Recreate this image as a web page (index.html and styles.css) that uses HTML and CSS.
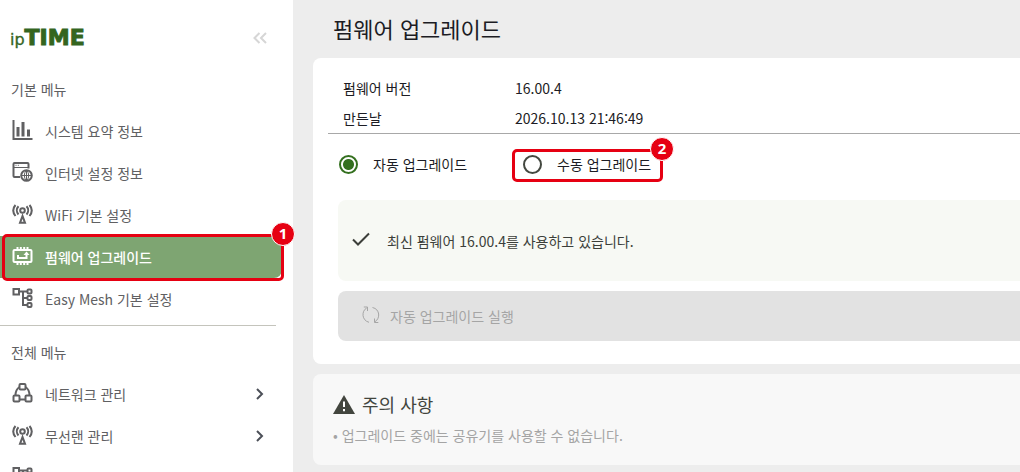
FILE: index.html
```html
<!DOCTYPE html>
<html lang="ko">
    <head>
        <meta charset="utf-8">
        <title>펌웨어 업그레이드</title>
        <link rel="stylesheet" href="styles.css">
    </head>
    <body>
        <!-- shared icons -->
        <svg class="sprite" aria-hidden="true">
            <symbol id="antenna" viewBox="0 0 20 20">
                <circle cx="10" cy="6.5" r="2.3"/>
                <path d="M6 10.5C3.8 8 3.8 4.5 6 2.2M14 10.5C16.200 8 16.200 4.500 14 2.200M3 12C.2 8.500.2 4.300 3 1M17 12C19.800 8.500 19.800 4.300 17 1M10 12L7.500 18.800H12.500Z"/>
            </symbol>
            <symbol id="mesh" viewBox="0 0 20 20">
                <path d="M1 1H6.500V6.500H1ZM6.500 3.500H15M10.500 3.500V17H15M10.500 10H15"/>
                <rect x="15" y="1.5" width="4" height="4" rx="1"/>
                <rect x="15" y="8" width="4" height="4" rx="1"/>
                <rect x="15" y="15" width="4" height="4" rx="1"/>
            </symbol>
            <symbol id="arrow" viewBox="0 0 10 14">
                <path d="M2 2L7 7L2 12"/>
            </symbol>
        </svg>
        <div class="layout">
            <nav class="sidebar">
                <div class="top">
                    <a class="logo" href="#"><span class="ip">ip</span><span class="time">TIME</span></a>
                    <button type="button" class="fold" aria-label="메뉴 접기">
                        <svg viewBox="0 0 14 12"><path d="M6.500 1L1.500 6L6.500 11M13 1L8 6L13 11"/></svg>
                    </button>
                </div>
                <h2>기본 메뉴</h2>
                <ul class="menu basic">
                    <li><a href="#">
                        <svg class="icon" viewBox="0 0 20 20"><path d="M1 0V19H20"/><path class="bars" d="M5.500 7V16.500M10.500 2V16.500M16 9.500V16.500"/></svg>
                        시스템 요약 정보</a></li>
                    <li><a href="#">
                        <svg class="icon" viewBox="0 0 20 20"><path d="M7.500 15H2Q1 15 1 14V2Q1 1 2 1H15Q16 1 16 2V6.500"/><circle cx="14" cy="13.5" r="5.3"/><path class="thin" d="M1 5.500H16M3 3.300H4M5.300 3.300H6.300M14 8Q9.500 13.500 14 19Q18.500 13.500 14 8M8.600 13.500H19.400M14 8V19"/></svg>
                        인터넷 설정 정보</a></li>
                    <li><a href="#"><svg class="icon"><use href="#antenna"/></svg>WiFi 기본 설정</a></li>
                    <li class="selected"><a href="#">
                        <svg class="icon" viewBox="0 0 20 20"><rect x="1" y="4" width="18" height="12" rx="1"/><path d="M5 3V1M8.300 3V1M11.700 3V1M15 3V1M5 17V19M8.300 17V19M11.700 17V19M15 17V19M5.500 9V12H14V8"/><path class="fill" d="M14 5.500L17 9H11Z"/></svg>
                        펌웨어 업그레이드</a>
                        <span class="mark"><b>1</b></span></li>
                    <li><a href="#"><svg class="icon"><use href="#mesh"/></svg>Easy Mesh 기본 설정</a></li>
                </ul>
                <h2>전체 메뉴</h2>
                <ul class="menu">
                    <li><a href="#">
                        <svg class="icon" viewBox="0 0 20 20"><rect x="7" y="1" width="6" height="5.5" rx="1"/><rect x="1" y="12.5" width="6" height="6" rx="1"/><rect x="13" y="12.5" width="6" height="6" rx="1"/><path d="M7 4Q3 6.500 3 12.500M13 4Q17 6.500 17 12.500M7 16.500H13"/></svg>
                        네트워크 관리<svg class="arrow"><use href="#arrow"/></svg></a></li>
                    <li><a href="#"><svg class="icon"><use href="#antenna"/></svg>무선랜 관리<svg class="arrow"><use href="#arrow"/></svg></a></li>
                    <li><a href="#" aria-label="Easy Mesh 관리"><svg class="icon"><use href="#mesh"/></svg></a></li>
                </ul>
            </nav>
            <main>
                <h1>펌웨어 업그레이드</h1>
                <section class="card">
                    <table class="version">
                        <tr><th scope="row">펌웨어 버전</th><td>16.00.4</td></tr>
                        <tr><th scope="row">만든날</th><td>2026.10.13 21:46:49</td></tr>
                    </table>
                    <div class="modes">
                        <label for="auto"><input type="radio" id="auto" name="mode" checked>자동 업그레이드</label>
                        <label for="manual"><input type="radio" id="manual" name="mode">수동 업그레이드<span class="mark"><b>2</b></span></label>
                    </div>
                    <div class="status">
                        <svg viewBox="0 0 18 14"><path d="M1 7.500L6 12.500L17 1.500"/></svg>
                        최신 펌웨어 16.00.4를 사용하고 있습니다.
                    </div>
                    <button type="button" class="run" disabled>
                        <svg viewBox="0 0 18 18"><path d="M7 16.300C-.3 14.500-.8 5 4.700 2M1.800 1H5.500V5M10.500 1.500C18 3 18.500 12.500 13 15.700M16.300 16.500H12.500V12.500"/></svg>
                        자동 업그레이드 실행
                    </button>
                </section>
                <section class="card notice">
                    <h3><svg viewBox="0 0 22 19"><path d="M11 0L22 19H0Z"/><path class="bang" d="M11 6.500V12M11 14V16.300"/></svg>주의 사항</h3>
                    <p>• 업그레이드 중에는 공유기를 사용할 수 없습니다.</p>
                </section>
            </main>
        </div>
    </body>
</html>
```
FILE: styles.css
```css
* {
    box-sizing: border-box;
}

body {
    margin: 0;
    background-color: #ededed;
    color: #1c1c24;
    font: 14px/20px "Noto Sans CJK KR", "Noto Sans", sans-serif;
}

h1, h2, h3, p, ul {
    margin: 0;
    padding: 0;
    font-weight: normal;
}

svg {
    fill: none;
    stroke: currentColor;
    flex: none;
}

button {
    font: inherit;
    border: 0;
}

.sprite {
    display: none;
}

.layout {
    display: flex;
    height: 100vh;
    overflow: hidden;
}

/* sidebar */
.sidebar {
    flex: none;
    width: 293px;
    background-color: white;
    color: #606062;
}

.top {
    display: flex;
    align-items: center;
    justify-content: space-between;
    height: 76px;
    padding: 0 26px 0 10px;
}

.logo {
    display: flex;
    align-items: baseline;
    color: #34651f;
    text-decoration: none;
}

.ip {
    font: 16px/20px "DejaVu Sans", sans-serif;
    -webkit-text-stroke: 1px #34651f;
    -webkit-text-stroke-width: thin;
}

.time {
    font: bold 22px/22px "DejaVu Sans", sans-serif;
    -webkit-text-stroke: 1px #34651f;
}

.fold {
    display: flex;
    padding: 0;
    background: none;
    color: #d6d6d6;
}

.fold svg {
    width: 14px;
    height: 12px;
    stroke-width: 2;
}

.sidebar h2 {
    padding: 3px 11px;
    font-size: 14px;
    line-height: 20px;
}

.sidebar h2 + .menu {
    margin-top: 8px;
}

.menu {
    list-style: none;
}

.basic {
    width: 276px;
    margin-bottom: 13px;
    padding-bottom: 5px;
    border-bottom: 1px solid #c4c4bc;
}

.menu li {
    position: relative;
}

.menu a {
    display: flex;
    align-items: center;
    height: 42px;
    padding: 0 12px;
    gap: 12px;
    color: inherit;
    text-decoration: none;
}

.icon {
    width: 21px;
    height: 20px;
    margin-bottom: 2px;
    stroke-width: 2;
}

.icon .bars {
    stroke-width: 3;
}

.icon .thin {
    stroke-width: 1;
}

.icon .fill {
    fill: currentColor;
    stroke: none;
}

.arrow {
    width: 10px;
    height: 14px;
    margin-left: auto;
    margin-right: 16px;
    stroke-width: 2;
    color: #4c5058;
}

.menu .selected {
    width: 282px;
    background-color: #7ea572;
    border-radius: 0 8px 8px 0;
    color: white;
    font-weight: 500;
}

/* red frame with a numbered badge on its corner */
.mark {
    position: absolute;
    inset: -2px -2px -3px 2px;
    border: 3px solid #e60012;
    border-radius: 5px;
}

.mark b {
    position: absolute;
    top: -15px;
    right: -14px;
    width: 24px;
    height: 24px;
    border: 1px solid white;
    border-radius: 50%;
    background-color: #e60012;
    color: white;
    font: bold 15px/21px "Noto Sans", sans-serif;
    text-align: center;
}

/* content */
main {
    flex: 1;
    padding-left: 20px;
}

h1 {
    padding: 12px 20px 14px;
    font-size: 22px;
    line-height: 32px;
}

.card {
    padding: 15px 0 23px 15px;
    border-radius: 8px 0 0 8px;
    background-color: white;
}

.version {
    width: 100%;
    border-collapse: collapse;
    border-bottom: 1px solid #a8a8a8;
}

.version th {
    width: 187px;
    padding: 5px 15px;
    font-weight: normal;
    text-align: left;
}

.version td {
    padding: 5px 0;
}

.modes {
    display: flex;
    gap: 33px;
    padding: 15px 0 18px;
}

.modes label {
    position: relative;
    display: flex;
    align-items: center;
    gap: 15px;
    width: 151px;
    height: 33px;
    padding: 0 0 3px 11px;
}

.modes input {
    appearance: none;
    width: 19px;
    height: 19px;
    margin: 0;
    border: 2px solid #444840;
    border-radius: 50%;
}

.modes input:checked {
    border-color: #34701f;
    background: radial-gradient(#34701f 0 5px, white 6px);
}

.modes .mark {
    inset: 0;
}

.status {
    display: flex;
    align-items: center;
    gap: 17px;
    height: 81px;
    margin-left: 10px;
    padding-left: 14px;
    border-radius: 8px 0 0 8px;
    background-color: #f7f9f4;
    color: #3c3f3a;
}

.status svg {
    width: 18px;
    height: 14px;
    margin-bottom: 3px;
    stroke-width: 2;
}

.run {
    display: flex;
    align-items: center;
    gap: 10px;
    width: 100%;
    height: 50px;
    margin: 10px 0 0 10px;
    padding: 0 24px;
    border-radius: 8px;
    background-color: #e2e2e2;
    color: #a5a5a5;
}

.run svg {
    width: 18px;
    height: 18px;
    margin-bottom: 3px;
}

.notice {
    margin-top: 10px;
    padding: 18px 20px 20px;
    background-color: #f8f8f8;
}

.notice h3 {
    display: flex;
    align-items: center;
    gap: 7px;
    color: #42453e;
    font-size: 18px;
    line-height: 24px;
}

.notice h3 svg {
    width: 22px;
    height: 19px;
    fill: #42453e;
    stroke: none;
}

.notice .bang {
    stroke: white;
    stroke-width: 2;
}

.notice p {
    padding: 9px 0 0;
    color: #a4a4a4;
}
```
